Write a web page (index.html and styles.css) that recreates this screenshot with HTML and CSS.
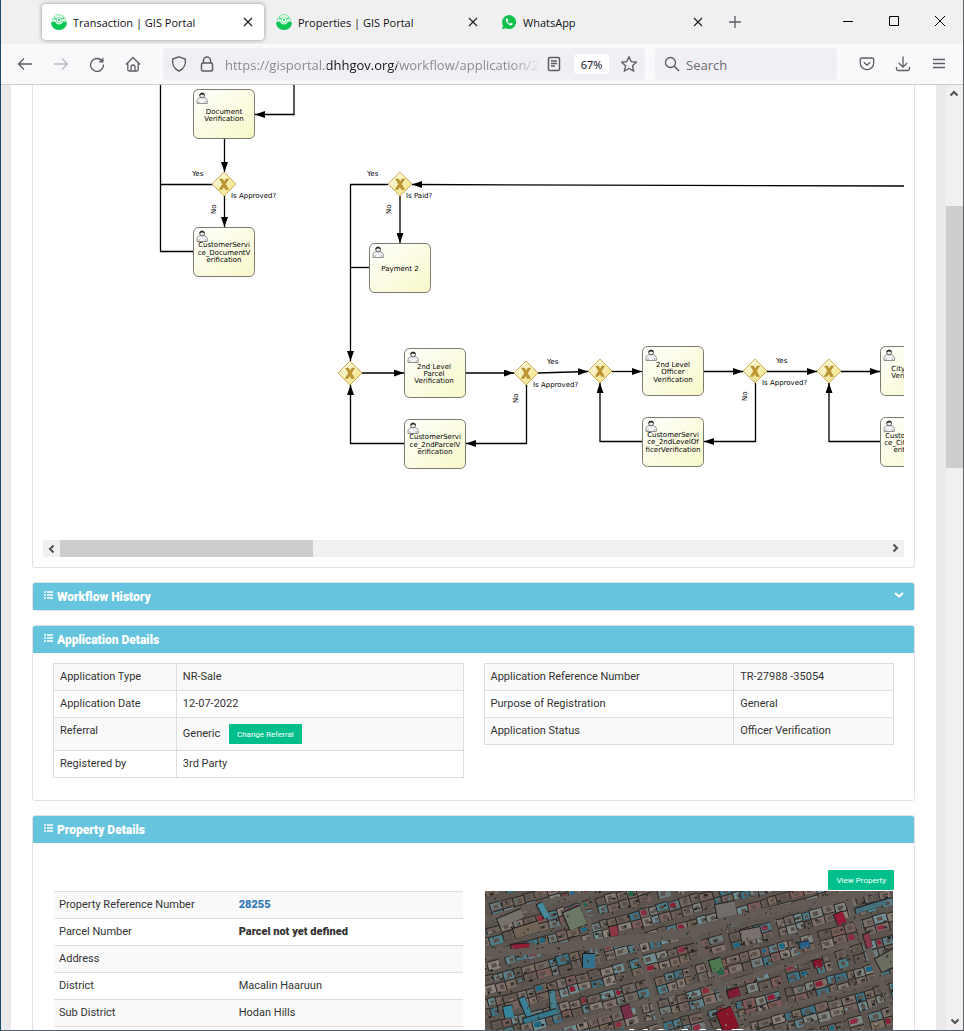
FILE: index.html
```html
<!DOCTYPE html>
<html lang="en">
<head>
  <meta charset="UTF-8" />
  <meta name="viewport" content="width=device-width, initial-scale=1.0"/>
  <title>Transaction | GIS Portal</title>
  <link rel="stylesheet" href="styles.css">
</head>
<body>

  <!-- Shared icons -->
  <svg class="defs" width="0" height="0" aria-hidden="true">
    <symbol id="i-portal" viewBox="0 0 16 16">
      <circle cx="8" cy="7" r="6.5" fill="#d9f7e4" stroke="#5bdc8b" stroke-dasharray="2 1"/>
      <path d="M0 8.500 L4 7.500 A4.200 4.200 0 0 0 12 7.500 L16 8.500 C16 12.500 12.500 16 8 16 S0 12.500 0 8.500Z" fill="#0ac755"/>
      <circle cx="8" cy="6.200" r="2.700" fill="#fff" stroke="#7be3a2"/>
      <circle cx="8" cy="6" r="1" fill="#0ac755"/>
      <path d="M3 4 L5.500 5 M13 4 L10.500 5" stroke="#0ac755"/>
    </symbol>
    <symbol id="i-close" viewBox="0 0 16 16">
      <path d="M4 4l8 8M12 4l-8 8" stroke="#222" stroke-width="1.200" fill="none"/>
    </symbol>
    <symbol id="i-list" viewBox="0 0 10 9">
      <path d="M1 1h2M1 4h2M1 7h2M4 1h6M4 4h6M4 7h6" stroke="#fff" stroke-width="1.400"/>
    </symbol>
    <symbol id="i-chev" viewBox="0 0 10 10">
      <path d="M6.500 1.500L3 5l3.500 3.500" stroke="#505050" stroke-width="2" fill="none"/>
    </symbol>
  </svg>

  <div class="window">

    <header class="titlebar">
      <div class="tab active">
        <svg class="favicon"><use href="#i-portal"/></svg>
        <span class="tab-title">Transaction | GIS Portal</span>
        <button class="tab-close" aria-label="Close tab"><svg width="16" height="16"><use href="#i-close"/></svg></button>
      </div>
      <div class="tab">
        <svg class="favicon"><use href="#i-portal"/></svg>
        <span class="tab-title">Properties | GIS Portal</span>
        <button class="tab-close" aria-label="Close tab"><svg width="16" height="16"><use href="#i-close"/></svg></button>
      </div>
      <div class="tab">
        <svg class="favicon" viewBox="0 0 16 16">
          <path d="M1 15.200 L2 11.500 A7 7 0 1 1 4.700 14.200Z" fill="#12c04c"/>
          <path d="M5.600 4.200c-1.400.9-1.200 2.600.4 4.600s3.600 3.100 5 2.300c.8-.5.900-1 .7-1.500l-1.700-.9-1 1c-1.200-.4-2-1.200-2.500-2.300l.7-.9-.7-1.900z" fill="#fff"/>
        </svg>
        <span class="tab-title">WhatsApp</span>
        <button class="tab-close" aria-label="Close tab"><svg width="16" height="16"><use href="#i-close"/></svg></button>
      </div>
      <button class="icon-btn new-tab" aria-label="New tab">
        <svg width="16" height="16" viewBox="0 0 16 16"><path d="M8 2v12M2 8h12"/></svg>
      </button>
      <div class="window-controls">
        <button aria-label="Minimize"><svg width="12" height="12" viewBox="0 0 12 12"><path d="M1 6.500h10"/></svg></button>
        <button aria-label="Maximize"><svg width="12" height="12" viewBox="0 0 12 12"><path d="M1.500 1.500h9v9h-9z"/></svg></button>
        <button aria-label="Close"><svg width="12" height="12" viewBox="0 0 12 12"><path d="M1 1l10 10M11 1l-10 10"/></svg></button>
      </div>
    </header>

    <nav class="toolbar">
      <button class="icon-btn" aria-label="Back"><svg width="16" height="16" viewBox="0 0 16 16"><path d="M15 8H1.500M7 2.500L1.500 8 7 13.500"/></svg></button>
      <button class="icon-btn disabled" aria-label="Forward" disabled><svg width="16" height="16" viewBox="0 0 16 16"><path d="M1 8h13.500M9 2.500L14.500 8 9 13.500"/></svg></button>
      <button class="icon-btn" aria-label="Reload"><svg width="16" height="16" viewBox="0 0 16 16"><path d="M13.500 5.500A6.500 6.500 0 1 0 14.500 8.500"/><path d="M14.500 1.500v5h-5z" fill="#5b5b66" stroke="none"/></svg></button>
      <button class="icon-btn" aria-label="Home"><svg width="16" height="16" viewBox="0 0 16 16"><path d="M1 8.500L8 1.500l7 7M2.800 7v6.500a1.500 1.500 0 0 0 1.500 1.500h7.400a1.500 1.500 0 0 0 1.500-1.500V7M6 15v-4a2 2 0 0 1 4 0v4"/></svg></button>

      <div class="urlbar">
        <button class="field-btn" aria-label="Tracking protection"><svg width="16" height="16" viewBox="0 0 16 16"><path d="M8 .8L14.300 3c.8 5-1.500 10-6.300 12.200C3.200 13 .9 8 1.700 3z" stroke-width="1.400"/></svg></button>
        <button class="field-btn" aria-label="Site security"><svg width="16" height="16" viewBox="0 0 16 16"><rect x="2.500" y="7" width="11" height="8" rx="1.500" stroke-width="1.500"/><path d="M4.500 7V4.500a3.500 3.500 0 0 1 7 0V7" stroke-width="1.500"/></svg></button>
        <input class="url" type="text" aria-label="Address" value="https://gisportal.dhhgov.org/workflow/application/27988">
        <button class="field-btn" aria-label="Reader view"><svg width="16" height="16" viewBox="0 0 16 16"><rect x="2.500" y="1.500" width="11" height="13" rx="1.500" stroke-width="1.500"/><path d="M5 5h6M5 7.500h6M5 10h4"/></svg></button>
        <button class="zoom">67%</button>
        <button class="field-btn" aria-label="Bookmark"><svg width="16" height="16" viewBox="0 0 16 16"><path d="M8 .8l2.200 4.800 5.200.6-3.900 3.500 1.100 5.300L8 12.400 3.400 15l1.100-5.300L.6 6.200l5.200-.6z"/></svg></button>
      </div>

      <div class="searchbar">
        <svg width="16" height="16" viewBox="0 0 16 16"><circle cx="6.500" cy="6.500" r="5"/><path d="M10.200 10.200L15 15" stroke-width="1.500"/></svg>
        <input type="search" aria-label="Search" placeholder="Search">
      </div>

      <button class="icon-btn" aria-label="Pocket"><svg width="16" height="16" viewBox="0 0 16 16"><path d="M2.500 2h11A1.200 1.200 0 0 1 14.700 3.200V7a6.700 6.700 0 0 1-13.400 0V3.200A1.200 1.200 0 0 1 2.500 2zM4.800 6.200L8 9.200l3.200-3"/></svg></button>
      <button class="icon-btn" aria-label="Downloads"><svg width="16" height="16" viewBox="0 0 16 16"><path d="M8 .5v10.500M3.800 7L8 11.200 12.200 7M1.500 11v2A1.500 1.500 0 0 0 3 14.500h10a1.500 1.500 0 0 0 1.500-1.500v-2"/></svg></button>
      <button class="icon-btn" aria-label="Menu"><svg width="16" height="16" viewBox="0 0 16 16"><path d="M2 3.500h12M2 7.500h12M2 11.500h12"/></svg></button>
    </nav>

    <div class="viewport">
      <main class="page">
        <div class="sheet">

          <!-- Workflow diagram -->
          <section class="panel diagram-panel">
            <div class="diagram">
              <svg width="1000" height="455" viewBox="43 85 1000 455">
                <defs>
                  <linearGradient id="task-fill" x1="0" y1="0" x2="1" y2="1">
                    <stop offset="0" stop-color="#ffffff"/>
                    <stop offset="1" stop-color="#f8f8c8"/>
                  </linearGradient>
                  <linearGradient id="gate-fill" x1="0" y1="0" x2="1" y2="1">
                    <stop offset="0" stop-color="#fffdee"/>
                    <stop offset="1" stop-color="#efe07a"/>
                  </linearGradient>
                  <marker id="arrow" viewBox="0 0 10 7" refX="10" refY="3.500" markerWidth="10" markerHeight="7" markerUnits="userSpaceOnUse" orient="auto">
                    <path d="M0 0L10 3.500 0 7z"/>
                  </marker>
                  <g id="task">
                    <rect x=".5" y=".5" width="61" height="49" rx="5" fill="url(#task-fill)" stroke="#7a7a70"/>
                    <path d="M4 14.500V11.500C4.300 9.500 6 9 7.500 8.500h3C12 9 14 9.500 14.300 11.500V14.500Z" fill="#f4f4f8" stroke="#777" stroke-width=".8"/>
                    <path d="M6 14.500V12M12.300 14.500V12" stroke="#888" stroke-width=".6"/>
                    <circle cx="9.100" cy="6.500" r="2.400" fill="#f0ece8" stroke="#444" stroke-width=".8"/>
                    <path d="M6.400 6.800C6 2.800 12.200 2.800 11.800 6.800 10.500 5 8 5 6.400 6.800Z" fill="#222"/>
                  </g>
                  <g id="gate">
                    <path d="M0-12L12 0 0 12-12 0z" fill="url(#gate-fill)" stroke="#cfac54"/>
                    <path d="M-4.500-5h3.200L0-2 2-5h2.800L1.500 0 4.500 5.500H1.300L0 2.500-2 5.500h-2.800L-1.400 0z" fill="#bd9630" stroke="#a88228" stroke-width=".4"/>
                  </g>
                </defs>

                <g class="flow">
                  <path class="plain" d="M160.500 85V251.500H194M213 184.500H160.500"/>
                  <path d="M294 85V114.500H255"/>
                  <path d="M224.500 139V172"/>
                  <path d="M224.500 196V227"/>
                  <path d="M904 186L412 184.500"/>
                  <path d="M388 184.500H350.500V361"/>
                  <path d="M400 196V243"/>
                  <path class="plain" d="M369 267.500H350.500"/>
                  <path d="M362 373H404"/>
                  <path d="M466 373H514"/>
                  <path d="M526.500 385V443.500H466"/>
                  <path d="M404 443.500H350.500V385"/>
                  <path d="M538 373L588 371.500"/>
                  <path d="M612 371.500H642"/>
                  <path d="M704 371.500H743"/>
                  <path d="M755.500 383V441.500H704"/>
                  <path d="M642 441.500H600V383"/>
                  <path d="M767 371.500H817"/>
                  <path d="M841 371.500H880"/>
                  <path d="M880 441.500H829V383"/>
                </g>

                <use href="#task" x="193" y="89"/>
                <use href="#task" x="193" y="227"/>
                <use href="#task" x="369" y="243"/>
                <use href="#task" x="404" y="348"/>
                <use href="#task" x="404" y="419"/>
                <use href="#task" x="642" y="346"/>
                <use href="#task" x="642" y="417"/>
                <use href="#task" x="880" y="346"/>
                <use href="#task" x="880" y="417"/>

                <use href="#gate" x="224" y="184"/>
                <use href="#gate" x="400" y="184"/>
                <use href="#gate" x="350" y="373"/>
                <use href="#gate" x="526" y="373"/>
                <use href="#gate" x="600" y="371"/>
                <use href="#gate" x="755" y="371"/>
                <use href="#gate" x="829" y="371"/>

                <g class="task-label">
                  <text x="224" y="114">Document</text><text x="224" y="121">Verification</text>
                  <text x="224" y="247">CustomerServi</text><text x="224" y="255">ce_DocumentV</text><text x="224" y="262">erification</text>
                  <text x="400" y="271">Payment 2</text>
                  <text x="434" y="369">2nd Level</text><text x="434" y="376">Parcel</text><text x="434" y="383">Verification</text>
                  <text x="435" y="439">CustomerServi</text><text x="435" y="447">ce_2ndParcelV</text><text x="435" y="454">erification</text>
                  <text x="673" y="367">2nd Level</text><text x="673" y="374">Officer</text><text x="673" y="382">Verification</text>
                  <text x="673" y="437">CustomerServi</text><text x="673" y="444">ce_2ndLevelOf</text><text x="673" y="452">ficerVerification</text>
                  <text x="911" y="371">City Officer</text><text x="911" y="378">Verification</text>
                  <text x="911" y="438">CustomerServi</text><text x="911" y="445">ce_CityOfficerV</text><text x="911" y="452">erification</text>
                </g>
                <g class="flow-label">
                  <text x="192" y="176">Yes</text><text x="231" y="198">Is Approved?</text>
                  <text x="367" y="176">Yes</text><text x="406" y="198">Is Paid?</text>
                  <text x="547" y="364">Yes</text><text x="533" y="387">Is Approved?</text>
                  <text x="776" y="363">Yes</text><text x="762" y="385">Is Approved?</text>
                  <text transform="translate(216 214) rotate(-90)">No</text>
                  <text transform="translate(391 214) rotate(-90)">No</text>
                  <text transform="translate(518 403) rotate(-90)">No</text>
                  <text transform="translate(747 401) rotate(-90)">No</text>
                </g>
              </svg>
            </div>
            <div class="scroll-x">
              <button class="scroll-btn" aria-label="Scroll left"><svg width="10" height="10"><use href="#i-chev"/></svg></button>
              <div class="track"><div class="thumb"></div></div>
              <button class="scroll-btn right" aria-label="Scroll right"><svg width="10" height="10"><use href="#i-chev"/></svg></button>
            </div>
          </section>

          <!-- Workflow history -->
          <section class="panel">
            <h2 class="panel-head">
              <svg class="list-icon"><use href="#i-list"/></svg>Workflow History
              <button class="collapse" aria-label="Expand"><svg width="10" height="8" viewBox="0 0 10 8"><path d="M1 2l4 3.500L9 2" stroke="#fff" stroke-width="2.200" fill="none"/></svg></button>
            </h2>
          </section>

          <!-- Application details -->
          <section class="panel">
            <h2 class="panel-head"><svg class="list-icon"><use href="#i-list"/></svg>Application Details</h2>
            <div class="panel-body columns">
              <table class="grid">
                <tr><th class="w30">Application Type</th><td>NR-Sale</td></tr>
                <tr><th>Application Date</th><td>12-07-2022</td></tr>
                <tr><th>Referral</th><td>Generic <button class="btn change">Change Referral</button></td></tr>
                <tr><th>Registered by</th><td>3rd Party</td></tr>
              </table>
              <table class="grid">
                <tr><th class="w61">Application Reference Number</th><td>TR-27988 -35054</td></tr>
                <tr><th>Purpose of Registration</th><td>General</td></tr>
                <tr><th>Application Status</th><td>Officer Verification</td></tr>
              </table>
            </div>
          </section>

          <!-- Property details -->
          <section class="panel">
            <h2 class="panel-head"><svg class="list-icon"><use href="#i-list"/></svg>Property Details</h2>
            <div class="panel-body property">
              <div class="actions"><button class="btn">View Property</button></div>
              <div class="columns wide">
                <table class="lines">
                  <tr><th class="w44">Property Reference Number</th><td><a href="#">28255</a></td></tr>
                  <tr><th>Parcel Number</th><td><b>Parcel not yet defined</b></td></tr>
                  <tr><th>Address</th><td></td></tr>
                  <tr><th>District</th><td>Macalin Haaruun</td></tr>
                  <tr><th>Sub District</th><td>Hodan Hills</td></tr>
                </table>
                <div class="map">
                  <canvas id="map" width="408" height="298"></canvas>
                  <span class="map-text">NO MAP</span>
                </div>
              </div>
            </div>
          </section>

        </div>
      </main>

      <div class="scroll-y">
        <button class="scroll-btn up" aria-label="Scroll up"><svg width="10" height="10"><use href="#i-chev"/></svg></button>
        <div class="track"><div class="thumb"></div></div>
        <button class="scroll-btn down" aria-label="Scroll down"><svg width="10" height="10"><use href="#i-chev"/></svg></button>
      </div>
    </div>
  </div>

  <script src="map.js"></script>
</body>
</html>
```

FILE: styles.css
```css
:root {
  --blue: #67c4df;
  --green: #00bf8b;
  --line: #ddd;
  --icon: #5b5b66;
  --ui: "Noto Sans", "Open Sans", sans-serif;
}

* {
  box-sizing: border-box;
}

body {
  margin: 0;
  font-family: Roboto, sans-serif;
  font-size: 11px;
  color: #333;
}

button {
  border: none;
  background: none;
  padding: 0;
  font-family: inherit;
  cursor: pointer;
}

.defs {
  position: absolute;
}

.window {
  display: flex;
  flex-direction: column;
  height: 100vh;
  border: 1px solid #5a6068;
  border-top: none;
  border-left-color: #1a4a68;
  overflow: hidden;
}

/* Title bar */
.titlebar {
  display: flex;
  flex: none;
  align-items: center;
  gap: 3px;
  height: 44px;
  padding-left: 41px;
  background: #f0f0f0;
  font-family: var(--ui);
}

.tab {
  display: flex;
  align-items: center;
  width: 222px;
  height: 36px;
  padding: 0 8px 0 9px;
  border-radius: 4px;
}

.tab.active {
  background: #fff;
  box-shadow: 0 0 4px rgba(0,0,0,0.4);
}

.favicon {
  width: 16px;
  height: 16px;
  margin-right: 6px;
}

.tab-title {
  flex: 1;
  font-family: "Open Sans", sans-serif;
  font-size: 11px;
  color: #111;
}

.tab-close {
  display: flex;
}

.icon-btn {
  display: flex;
  flex: none;
  align-items: center;
  justify-content: center;
  width: 36px;
  height: 32px;
}

.icon-btn svg, .field-btn svg, .searchbar svg {
  fill: none;
  stroke: var(--icon);
  stroke-width: 1.3;
}

.icon-btn.disabled {
  opacity: 0.4;
}

.window-controls {
  display: flex;
  margin-left: auto;
}

.window-controls button {
  width: 46px;
  height: 32px;
}

.window-controls svg {
  fill: none;
  stroke: #000;
}

/* Toolbar */
.toolbar {
  display: flex;
  flex: none;
  align-items: center;
  height: 41px;
  padding: 0 6px;
  background: #f9f9fb;
  border-bottom: 1px solid #ccc;
  font-family: var(--ui);
}

.urlbar, .searchbar {
  display: flex;
  align-items: center;
  height: 32px;
  background: #f0f0f4;
  border-radius: 4px;
}

.urlbar {
  flex: 1;
  min-width: 0;
  margin-left: 12px;
  padding: 0 2px;
}

.field-btn {
  display: flex;
  flex: none;
  align-items: center;
  justify-content: center;
  width: 28px;
  height: 28px;
}

.toolbar input {
  min-width: 0;
  flex: 1;
  height: 26px;
  border: none;
  outline: none;
  padding: 2px 0 0;
  font-family: "Open Sans", sans-serif;
  font-size: 13px;
  background: none;
}

/* the domain is darker than the rest and the end fades out */
.toolbar .url {
  margin-left: 4px;
  color: transparent;
  background: linear-gradient(to right, #85858c 102px, #15141a 102px, #15141a 172px, #85858c 172px, #85858c calc(100% - 28px), transparent);
  -webkit-background-clip: text;
  background-clip: text;
}

.zoom {
  flex: none;
  width: 35px;
  height: 20px;
  margin: 0 6px;
  border-radius: 3px;
  background: #fff;
  font-size: 11px;
  color: #15141a;
}

.searchbar {
  width: 182px;
  margin: 0 12px 0 10px;
  padding: 0 9px;
  gap: 6px;
}

.searchbar input::placeholder {
  color: #6a6a74;
}

/* Page */
.viewport {
  display: flex;
  flex: 1;
  min-height: 0;
}

.page {
  flex: 1;
  min-width: 0;
  padding: 0 10px;
  background: #eaeaea;
  overflow: hidden;
}

.sheet {
  padding: 0 21px;
  background: #fff;
}

.panel {
  margin-bottom: 14px;
  border: 1px solid #e3e0e6;
  border-radius: 3px;
}

.diagram-panel {
  padding: 0 10px 10px;
  border-top: none;
  border-radius: 0 0 3px 3px;
}

.panel-head {
  display: flex;
  align-items: center;
  height: 27px;
  margin: 0;
  padding: 0 10px;
  border-radius: 2px 2px 0 0;
  background: var(--blue);
  color: #fff;
  font-size: 12px;
  font-weight: 900;
}

.list-icon {
  width: 10px;
  height: 9px;
  margin: 0 4px 3px 0;
}

.collapse {
  display: flex;
  margin: 0 0 4px auto;
}

.panel-body {
  padding: 10px 20px 22px;
}

.columns {
  display: grid;
  grid-template-columns: 1fr 1fr;
  gap: 20px;
  align-items: start;
}

.columns.wide {
  gap: 22px;
  padding: 0 1px;
}

/* Diagram */
.diagram {
  overflow: hidden;
}

.diagram svg {
  display: block;
}

.diagram text {
  font-family: "DejaVu Sans", Verdana, sans-serif;
  font-size: 7px;
  fill: #000;
}

.task-label {
  text-anchor: middle;
}

.flow path {
  fill: none;
  stroke: #000;
  stroke-width: 1.3;
  marker-end: url(#arrow);
}

.flow .plain {
  marker-end: none;
}

/* Scrollbars */
.scroll-x, .scroll-y {
  display: flex;
  flex: none;
  background: #f0f0f0;
}

.scroll-x {
  height: 17px;
}

.scroll-y {
  flex-direction: column;
  width: 17px;
}

.scroll-btn {
  display: flex;
  flex: none;
  align-items: center;
  justify-content: center;
  width: 17px;
  height: 17px;
}

.scroll-btn.right {
  transform: rotate(180deg);
}

.scroll-btn.up {
  transform: rotate(90deg);
}

.scroll-btn.down {
  transform: rotate(-90deg);
}

.track {
  display: flex;
  flex: 1;
}

.thumb {
  background: #cdcdcd;
}

.scroll-x .thumb {
  width: 30.6%;
}

.scroll-y .track {
  flex-direction: column;
}

.scroll-y .track::before {
  content: "";
  height: 11.4%;
}

.scroll-y .thumb {
  height: 28.8%;
}

/* Tables */
table {
  width: 100%;
  border-collapse: collapse;
  table-layout: fixed;
}

th, td {
  height: 27px;
  padding: 6px;
  line-height: 14px;
  font-weight: 400;
  text-align: left;
  vertical-align: top;
}

tr:nth-child(odd) {
  background: #f9f9f9;
}

.grid th, .grid td {
  border: 1px solid var(--line);
}

.lines th, .lines td {
  padding-left: 5px;
  border-top: 1px solid var(--line);
}

.lines tr:last-child {
  border-bottom: 1px solid var(--line);
}

.lines b, .lines a {
  font-weight: 900;
}

.lines a {
  color: #337ab7;
  text-decoration: none;
}

.w30 { width: 30%; }
.w44 { width: 44%; }
.w61 { width: 61%; }

.btn {
  height: 20px;
  padding: 0 8px;
  border-radius: 1px;
  background: var(--green);
  color: #fff;
  font-size: 8px;
  vertical-align: middle;
}

.change {
  margin-left: 6px;
}

.property {
  padding-top: 27px;
}

.actions {
  display: flex;
  justify-content: flex-end;
  margin-bottom: 1px;
}

/* Map */
.map {
  position: relative;
  display: flex;
}

.map canvas {
  width: 100%;
}

.map-text {
  position: absolute;
  inset: 0;
  display: flex;
  align-items: center;
  justify-content: center;
  color: #fff;
  font-size: 32px;
  font-weight: 700;
}
```

FILE: map.js
```js
// Draws the darkened aerial view behind the "NO MAP" text
(function () {
  var canvas = document.getElementById("map");
  var ctx = canvas.getContext("2d");
  var seed = 7;

  function rnd() {
    seed = (seed * 16807) % 2147483647;
    return seed / 2147483647;
  }

  function pick(list) {
    return list[Math.floor(rnd() * list.length)];
  }

  var roofs = [
    "#78706a", "#6e6660", "#847c72", "#736458", "#615851", "#7e8580", "#6c7a7c",
    "#5d7f88", "#80706a", "#6b5f58", "#8a8278", "#75625c", "#4c7f8c", "#6f8d92",
    "#5f564e", "#7b6c60", "#665c55", "#7c5a58", "#3d7284"
  ];

  ctx.fillStyle = "#5c544e";
  ctx.fillRect(0, 0, 408, 298);

  // rows of houses
  ctx.save();
  ctx.rotate(-0.27);
  for (var y = -10; y < 420; y += 23) {
    for (var x = -110; x < 440;) {
      var w = 7 + rnd() * 8;
      if (rnd() < 0.1) { x += 6; }
      for (var k = 0; k < 2; k++) {
        var t = y + k * 9 + rnd() * 2;
        var h = 6 + rnd() * 3;
        ctx.fillStyle = "#2a2725";
        ctx.fillRect(x - 1, t - 1, w, h + 1);
        ctx.fillStyle = pick(roofs);
        ctx.fillRect(x, t, w - 1, h);
        ctx.fillStyle = "#5b514a";
        ctx.fillRect(x + 2 + rnd() * 2, t + 2, w * 0.4, h * 0.5);
        ctx.fillStyle = pick(["#242220", "#2b332b", pick(roofs)]);
        ctx.fillRect(x + rnd() * w, t + rnd() * h, 2 + rnd() * 2, 2);
        if (rnd() < 0.1) {
          ctx.fillStyle = pick(["#8d1f35", "#1c6885", "#24634a", "#8f2b3e"]);
          ctx.fillRect(x + 1, t + 1, w * 0.5, h * 0.6);
        }
      }
      x += w;
    }
  }
  ctx.restore();

  // streets
  function road(points, width) {
    ctx.beginPath();
    ctx.moveTo(points[0], points[1]);
    for (var i = 2; i < points.length; i += 2) {
      ctx.lineTo(points[i], points[i + 1]);
    }
    ctx.lineWidth = width;
    ctx.strokeStyle = "#625a55";
    ctx.stroke();
  }
  road([-5, 62, 60, 58, 120, 52, 200, 42, 270, 24, 340, 10, 412, -8], 10);
  road([-5, 30, 50, 14, 110, 2], 6);
  road([208, 42, 225, 75, 240, 105, 275, 190, 300, 300], 7);
  road([360, 2, 378, 45, 400, 100, 430, 170], 7);
  road([90, 0, 104, 30, 108, 55], 4);
  road([150, 50, 165, 95, 180, 150, 210, 298], 5);
  road([225, 98, 310, 72, 372, 50], 5);
  road([60, 140, 170, 108, 220, 92], 5);
  road([245, 130, 330, 108, 410, 84], 4);

  // larger buildings: x, y, width, height, angle, colour
  [
    [78, 22, 18, 19, -0.4, "#6b7866"],
    [28, 38, 26, 10, -0.3, "#706254"],
    [12, 28, 26, 9, -0.4, "#77716b"],
    [230, 14, 20, 14, -0.2, "#716d6a"],
    [255, 40, 20, 11, -0.2, "#78716e"],
    [370, 18, 32, 5, -0.3, "#44707c"],
    [390, 68, 22, 15, -0.5, "#6a6e60"],
    [224, 70, 12, 12, -0.3, "#4f7a50"],
    [231, 122, 16, 22, -0.4, "#861428"],
    [349, 24, 9, 11, -0.4, "#961c38"],
    [328, 70, 8, 8, -0.3, "#85152b"],
    [378, 44, 6, 14, -0.3, "#86384a"],
    [26, 54, 18, 4, -0.1, "#921d35"],
    [124, 36, 8, 10, -0.2, "#8a3645"],
    [34, 108, 6, 24, -0.4, "#3b7f96"],
    [64, 100, 6, 22, -0.1, "#487f8c"],
    [38, 128, 34, 5, -0.3, "#35788d"],
    [52, 14, 6, 16, -0.5, "#428a9c"],
    [98, 63, 12, 14, 0, "#35718c"],
    [18, 116, 9, 12, -0.2, "#34849b"],
    [136, 116, 9, 13, -0.3, "#753047"],
    [314, 52, 10, 6, -0.2, "#245f8b"],
    [242, 100, 12, 8, -0.3, "#7e1d31"]
  ].forEach(function (b) {
    ctx.save();
    ctx.translate(b[0], b[1]);
    ctx.rotate(b[4]);
    ctx.fillStyle = "#1f1d1c";
    ctx.fillRect(-1, -1, b[2] + 1, b[3] + 1);
    ctx.fillStyle = b[5];
    ctx.fillRect(0, 0, b[2], b[3]);
    ctx.restore();
  });

  // trees and cars
  for (var i = 0; i < 1300; i++) {
    ctx.fillStyle = pick(["#2d2a28", "#3a3733", "#7b746c", "#29332a", "#6e6760"]);
    ctx.fillRect(rnd() * 408, rnd() * 298, 1 + rnd(), 1 + rnd());
  }
})();
```
